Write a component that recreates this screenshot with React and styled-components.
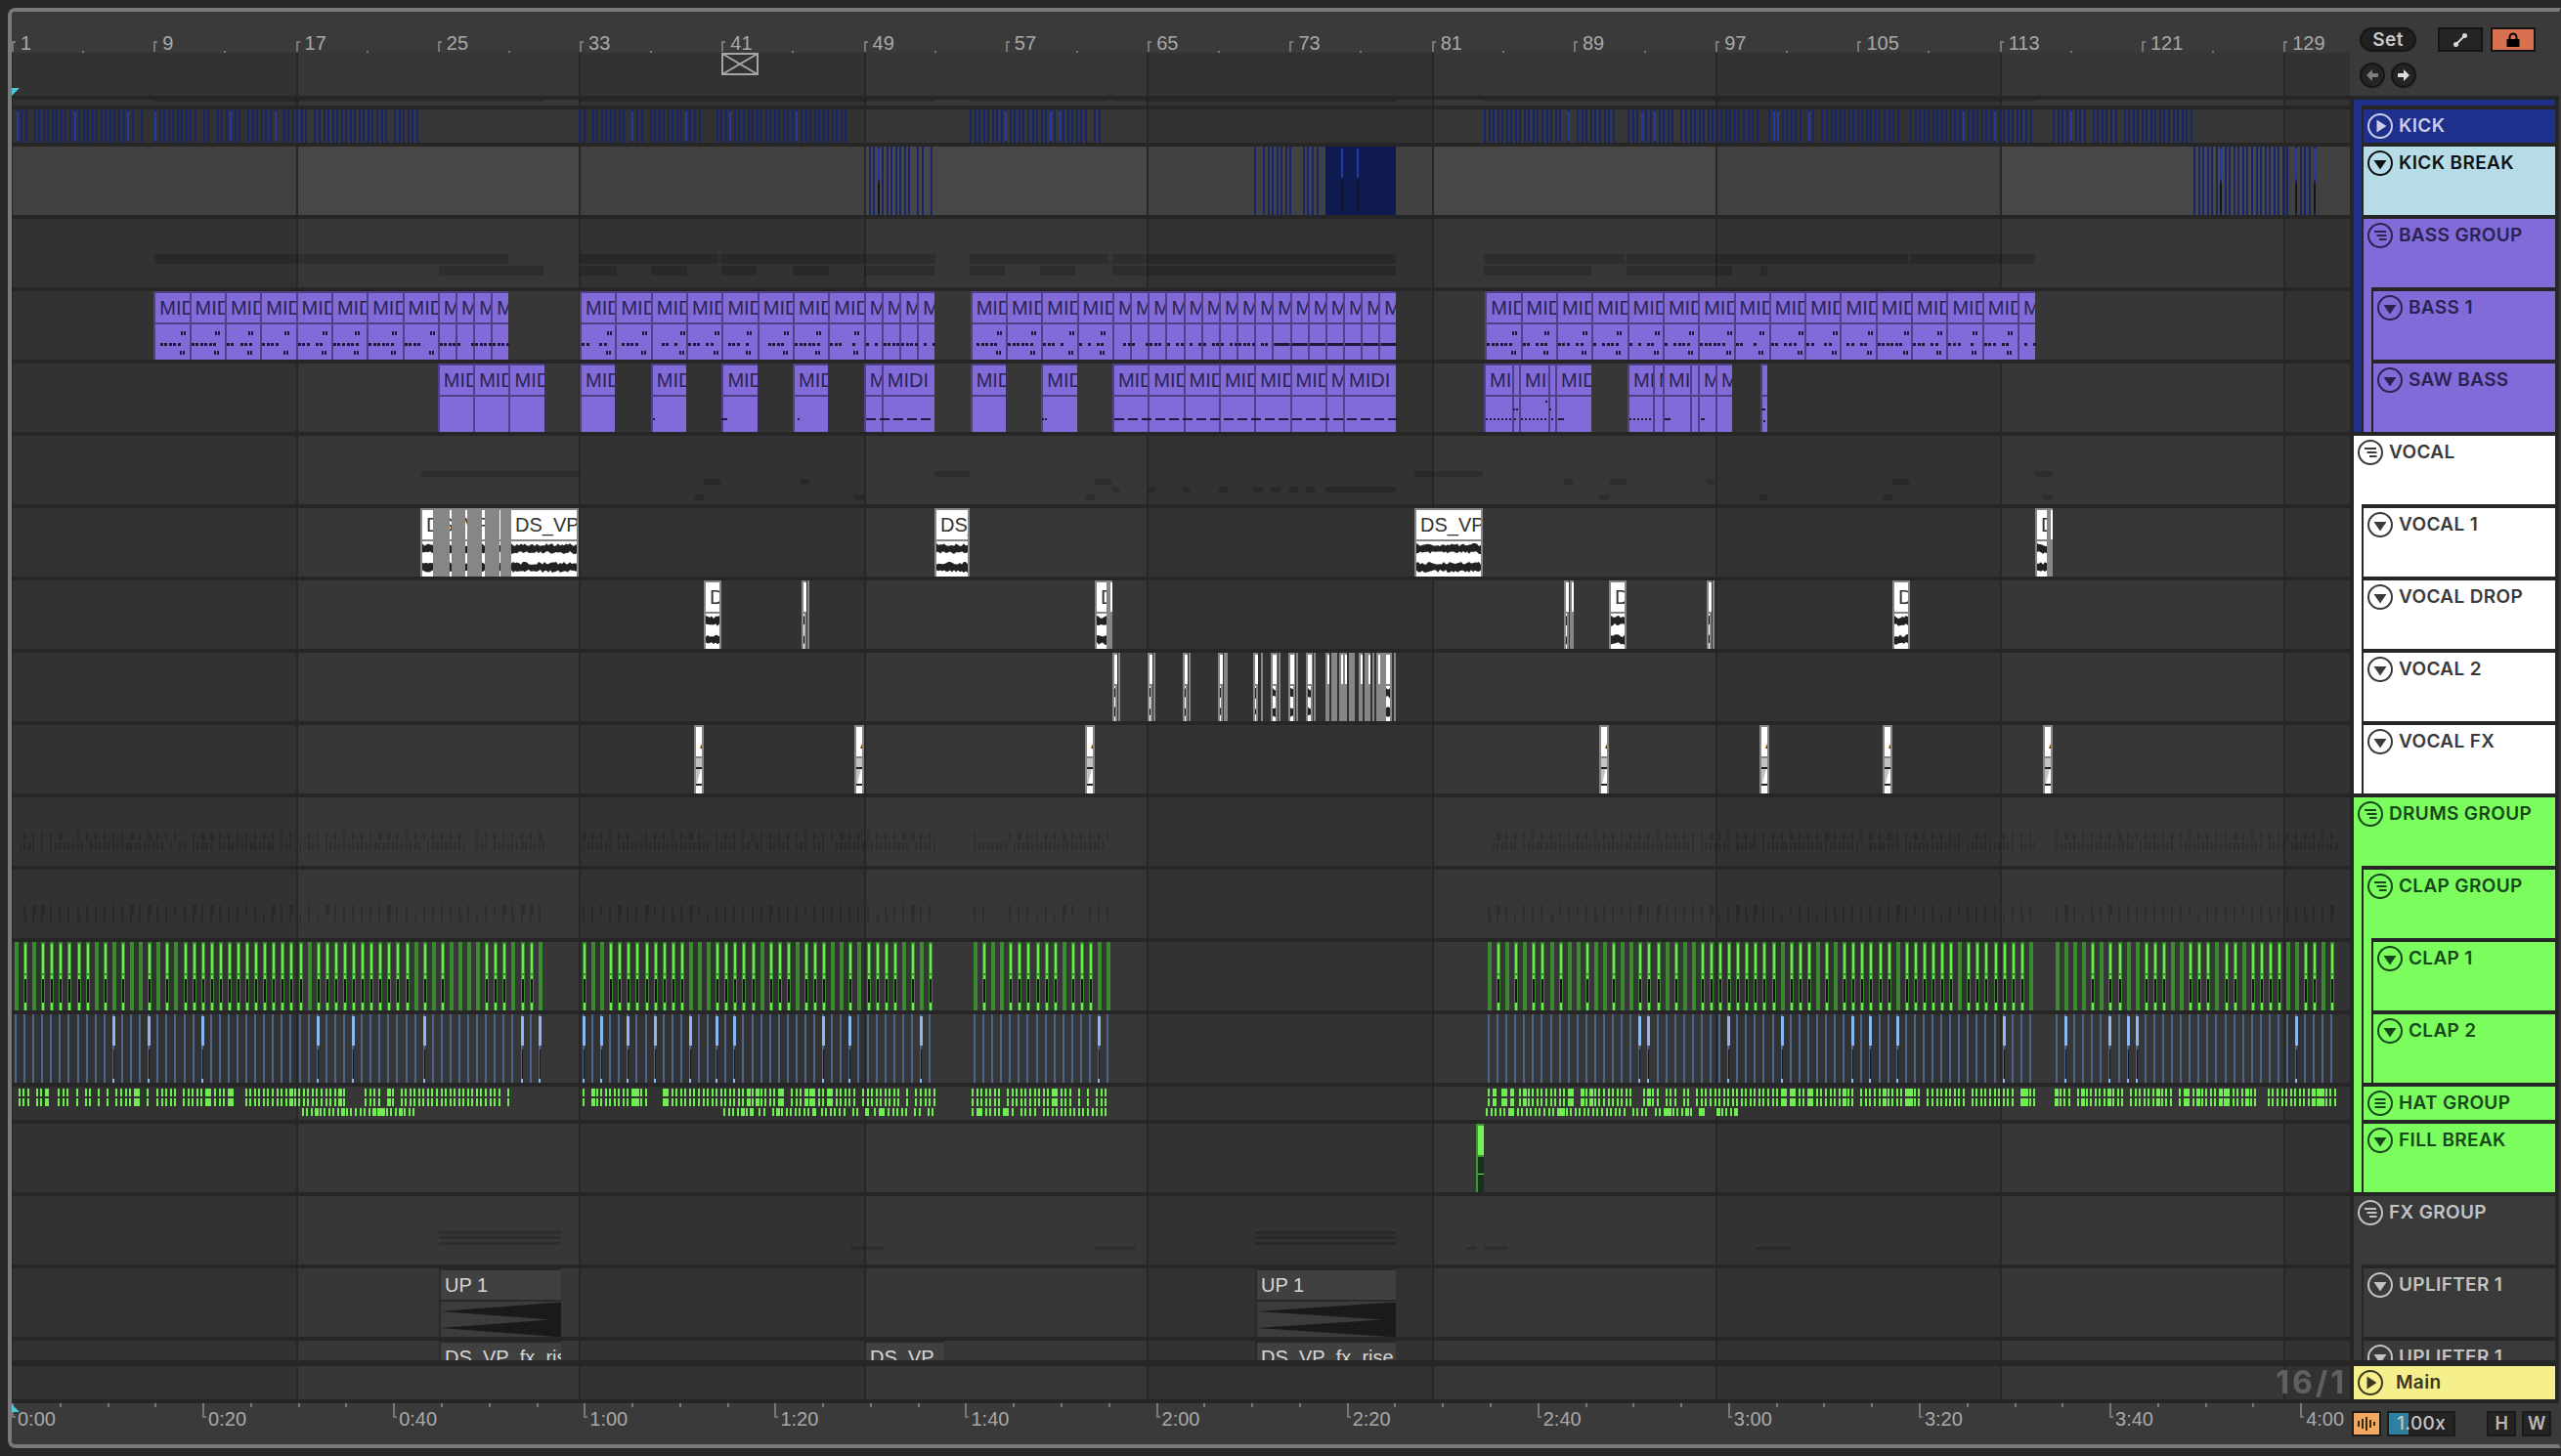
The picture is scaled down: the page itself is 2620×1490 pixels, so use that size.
import React from 'react';
import styled, { createGlobalStyle } from 'styled-components';

const SEP = '#262626';
const GRID = '#272727';
const FRAME = '#7a7a7a';
const PANEL = '#3a3a3a';
const BAR = 18.16;

const GlobalStyle = createGlobalStyle`
  html, body {
    margin: 0;
    width: 2620px;
    height: 1490px;
    overflow: hidden;
    background: #292929;
    font-family: "Liberation Sans", Arial, sans-serif;
  }
`;

const Page = styled.div`
  box-sizing: border-box;
  width: 2620px;
  height: 1490px;
  padding: 8px 0 8px 8px;
`;

const Frame = styled.div`
  height: 100%;
  box-sizing: border-box;
  display: flex;
  flex-direction: column;
  background: ${SEP};
  border: 4px solid ${FRAME};
  border-right: 2px solid ${PANEL};
  border-radius: 8px 0 0 8px;
  overflow: hidden;
`;

const TopBar = styled.div`
  display: flex;
  height: 86px;
  flex: none;
  background: ${PANEL};
`;

const TimelineHead = styled.div`
  width: 2392px;
  display: flex;
  flex-direction: column;
`;

const Ruler = styled.div`
  height: 42px;
  display: flex;
  overflow: hidden;
  flex: none;
`;

const BarCell = styled.div`
  position: relative;
  flex: 0 0 ${BAR * 8}px;
`;

const BarTick = styled.i`
  position: absolute;
  left: 0;
  top: 30px;
  width: 2px;
  height: 11px;
  background: #777;
  &::after {
    content: '';
    position: absolute;
    left: 0;
    top: 0;
    width: 4px;
    height: 2px;
    background: #777;
  }
`;

const HalfTick = styled.i`
  position: absolute;
  left: 72px;
  top: 40px;
  width: 2px;
  height: 2px;
  background: #777;
`;

const BarLabel = styled.span`
  position: absolute;
  left: 9px;
  top: 21px;
  font-size: 20px;
  line-height: 23px;
  color: #a8a8a8;
`;

const shaded = (a, b) => `repeating-linear-gradient(90deg,
  ${GRID} 0 1px, ${a} 1px 290.6px, ${GRID} 290.6px 292.6px, ${b} 292.6px 580.2px, ${GRID} 580.2px 581.2px)`;

const Lane = styled.div`
  position: relative;
  width: 2392px;
  height: ${p => p.$h}px;
  flex: none;
  background: ${p => (p.$light ? shaded('#414141', '#474747') : shaded('#323232', '#373737'))};
`;

const LocatorStrip = styled(Lane)`
  flex: 1;
`;

const LocatorFlag = styled.svg`
  position: absolute;
  left: 726px;
  top: 0;
`;

const CueTop = styled.i`
  position: absolute;
  left: 0;
  bottom: 0;
  width: 8px;
  height: 8px;
  background: #4fc3da;
  clip-path: polygon(0 0, 100% 0, 0 100%);
`;

const Controls = styled.div`
  flex: 1;
  padding: 16px 0 0 10px;
  display: grid;
  grid-template-columns: 26px 26px 62px 48px;
  grid-template-rows: 25px 25px;
  column-gap: 6px;
  row-gap: 11px;
`;

const SetPill = styled.div`
  grid-column: 1 / span 2;
  border-radius: 13px;
  background: #202020;
  border: 2px solid #161616;
  box-sizing: border-box;
  color: #c8c8c8;
  font: 600 19px/21px "Inter", sans-serif;
  letter-spacing: 0.4px;
  text-align: center;
`;

const HeadButton = styled.div`
  box-sizing: border-box;
  display: flex;
  align-items: center;
  justify-content: center;
  border: 2px solid #141414;
  background: ${p => p.$bg || '#242424'};
  margin-left: ${p => p.$ml || 0}px;
`;

const NavButton = styled.div`
  width: 26px;
  height: 26px;
  box-sizing: border-box;
  border-radius: 50%;
  background: #242424;
  border: 2px solid #161616;
  display: flex;
  align-items: center;
  justify-content: center;
`;

const Divider = styled.div`
  height: ${p => p.$h}px;
  flex: none;
`;

const Body = styled.div`
  display: flex;
  gap: 4px;
  height: 1290px;
  flex: none;
  overflow: hidden;
`;

const Lanes = styled.div`
  display: flex;
  flex-direction: column;
  gap: 4px;
  width: 2392px;
  flex: none;
`;

const Art = styled.svg`
  position: absolute;
  left: 0;
  top: 0;
  display: block;
  pointer-events: none;
`;

const Side = styled.div`
  width: 206px;
  flex: none;
  display: flex;
  flex-direction: column;
  gap: 4px;
`;

const GroupBox = styled.div`
  background: ${p => p.$bg};
  flex: none;
`;

const GroupChildren = styled.div`
  margin-left: 8px;
  padding: 4px 0 0 2px;
  background: ${SEP};
  display: flex;
  flex-direction: column;
  gap: 4px;
`;

const TrackHead = styled.div`
  height: ${p => p.$h}px;
  box-sizing: border-box;
  padding: 4px 0 0 4px;
  display: flex;
  gap: 6px;
  background: ${p => p.$bg};
  color: ${p => p.$fg};
  overflow: hidden;
`;

const TrackName = styled.span`
  font: 600 19px/26px "Inter", sans-serif;
  letter-spacing: 0.35px;
  white-space: nowrap;
`;

const MainRow = styled.div`
  display: flex;
  gap: 4px;
  height: 34px;
  flex: none;
`;

const MainLane = styled(Lane)`
  display: flex;
  align-items: center;
  justify-content: flex-end;
  padding-right: 3px;
  box-sizing: border-box;
`;

const Quant = styled.span`
  font: 700 32px/34px "Inter", sans-serif;
  letter-spacing: 3px;
  color: #606060;
`;

const MainHead = styled.div`
  width: 206px;
  background: #f5f08c;
  color: #3a3820;
  display: flex;
  align-items: center;
  box-sizing: border-box;
  padding-left: 4px;
  gap: 13px;
`;

const BottomBar = styled.div`
  display: flex;
  height: 42px;
  flex: none;
  background: ${PANEL};
`;

const TimeRuler = styled.div`
  position: relative;
  width: 2392px;
  display: flex;
  overflow: hidden;
`;

const CueBottom = styled.i`
  position: absolute;
  left: 0;
  top: 1px;
  width: 8px;
  height: 8px;
  background: #4fc3da;
  clip-path: polygon(0 0, 100% 100%, 0 100%);
`;

const TimeCell = styled.div`
  position: relative;
  flex: 0 0 195.1px;
  display: flex;
`;

const TimeTick = styled.i`
  flex: 1;
  height: 4px;
  border-left: 2px solid #777;
  box-sizing: border-box;
`;

const TimeMajor = styled.i`
  position: absolute;
  left: 0;
  top: 0;
  width: 4px;
  height: 15px;
  border-left: 2px solid #777;
  border-bottom: 2px solid #777;
  box-sizing: border-box;
`;

const TimeLabel = styled.span`
  position: absolute;
  left: 6px;
  top: 5px;
  font-size: 20px;
  line-height: 23px;
  color: #a8a8a8;
`;

const BottomTools = styled.div`
  width: 212px;
  margin-left: 4px;
  padding-top: 8px;
  box-sizing: border-box;
  display: flex;
  align-items: flex-start;
`;

const MeterButton = styled.div`
  width: 30px;
  height: 26px;
  box-sizing: border-box;
  background: #f2a95f;
  border: 2px solid #1c1c1c;
  display: flex;
  align-items: center;
  justify-content: center;
`;

const TempoBox = styled.div`
  position: relative;
  width: 70px;
  height: 26px;
  margin-left: 6px;
  box-sizing: border-box;
  background: #232323;
  border: 2px solid #1c1c1c;
  color: #c4c4c4;
  font: 500 19px/22px "Inter", sans-serif;
  letter-spacing: 0.4px;
  text-align: center;
  overflow: hidden;
`;

const TempoFill = styled.i`
  position: absolute;
  left: 0;
  top: 0;
  bottom: 0;
  width: 20px;
  background: #2f7f9e;
`;

const TempoText = styled.span`
  position: relative;
`;

const KeyButton = styled.div`
  width: 30px;
  height: 26px;
  margin-left: ${p => p.$ml || 0}px;
  box-sizing: border-box;
  background: #242424;
  border: 2px solid #1a1a1a;
  color: #b8b8b8;
  font: 600 18px/22px "Inter", sans-serif;
  text-align: center;
`;

const TONES = {
  purple: { edge: '#4f4088', bg: '#826bd9', fg: '#2a2352' },
  white: { edge: '#868686', bg: '#ffffff', fg: '#333333' },
  green: { edge: '#3f9636', bg: '#72f552', fg: '#17481a' },
  grey: { edge: '#2a2a2a', bg: '#404040', fg: '#d6d6d6' },
};

const ClipBox = styled.div.attrs(p => ({ style: { left: p.$x - 12, width: p.$w } }))`
  position: absolute;
  top: 0;
  height: 100%;
  box-sizing: border-box;
  padding: 2px ${p => (p.$tone === 'white' ? 2 : 0)}px 0 2px;
  background: ${p => TONES[p.$tone].edge};
  display: flex;
  flex-direction: column;
  gap: 2px;
  overflow: hidden;
`;

const ClipTitle = styled.div`
  height: 30px;
  flex: none;
  box-sizing: border-box;
  padding-left: 4px;
  background: ${p => TONES[p.$tone].bg};
  color: ${p => TONES[p.$tone].fg};
  font-size: 20px;
  line-height: 30px;
  white-space: nowrap;
  overflow: hidden;
`;

const ClipBody = styled.div`
  flex: 1;
  min-height: 0;
  background: ${p => p.$bg || TONES[p.$tone].bg};
  overflow: hidden;
`;

const GreyBar = styled.i.attrs(p => ({ style: { left: p.$x - 12, width: p.$w } }))`
  position: absolute;
  top: 0;
  height: 100%;
  background: #868686;
`;

// small seeded generator so that the patterns stay the same on every load
const seeded = seed => {
  let s = seed;
  return () => {
    s = (s * 16807) % 2147483647;
    return s / 2147483647;
  };
};

const pathOf = rects => rects.map(([x, y, w, h]) => `M${x} ${y}h${w}v${h}h${-w}z`).join('');

function Marks({ h, layers }) {
  return (
    <Art width={2392} height={h} viewBox={`12 0 2392 ${h}`}>
      {layers.map(([fill, rects]) => (
        <path key={fill} fill={fill} d={pathOf(rects)} />
      ))}
    </Art>
  );
}

function Clip({ x, w, tone = 'purple', title, children, bodyBg }) {
  return (
    <ClipBox $x={x} $w={w} $tone={tone}>
      <ClipTitle $tone={tone}>{title}</ClipTitle>
      <ClipBody $tone={tone} $bg={bodyBg}>{children}</ClipBody>
    </ClipBox>
  );
}

function Waveform({ w, seed }) {
  const rnd = seeded(seed);
  const top = [];
  const bot = [];
  for (let i = 0; i <= w; i += 2) {
    top.push([i, 2 + rnd() * 3, 10 + rnd() * 3]);
    bot.push([i, 21 + rnd() * 3, 29 + rnd() * 3]);
  }
  const poly = (list, a, b) =>
    list.map(p => `${p[0]},${p[a]}`).join(' ') + ' ' + [...list].reverse().map(p => `${p[0]},${p[b]}`).join(' ');
  return (
    <svg width={w} height={36} style={{ display: 'block' }}>
      <polygon fill="#222" points={poly(top, 1, 2)} />
      <polygon fill="#222" points={poly(bot, 1, 2)} />
    </svg>
  );
}

function FxWave({ w }) {
  return (
    <svg width={w} height={36} style={{ display: 'block' }}>
      <polygon fill="#c4c4c4" points={`0,0 ${w},0 ${w},9 0,9`} />
      <polygon fill="#c4c4c4" points={`0,11 5,11 1,26 0,26`} />
      <rect y={9} width={w} height={2} fill="#222" />
      <rect y={26} width={w} height={2} fill="#222" />
    </svg>
  );
}

function Riser({ w }) {
  const half = Math.round(w * 0.96);
  const tri = cy => `0,${cy} ${half},${cy - 9} ${w},${cy - 9} ${w},${cy + 9} ${half},${cy + 9}`;
  return (
    <svg width={w} height={36} style={{ display: 'block' }}>
      <polygon fill="#1a1a1a" points={tri(10)} />
      <polygon fill="#1a1a1a" points={tri(27)} />
    </svg>
  );
}

const KICK_RANGES = [[12, 149], [158, 427], [592, 872], [992, 1129], [1518, 1655], [1665, 1798], [1809, 1948], [1954, 2078], [2100, 2242]];
const BREAK_RANGES = [[884, 954], [1283, 1352], [2244, 2369]];

const stripes = (ranges, h, seed, withLow) => {
  const rnd = seeded(seed);
  const dim = [];
  const bright = [];
  const low = [];
  ranges.forEach(([a, b]) => {
    for (let x = a; x < b - 1; x += BAR / 4) {
      const r = rnd();
      const px = Math.round(x);
      if (r < 0.06) continue;
      dim.push([px, 0, 2, h]);
      if (r < 0.13) {
        bright.push([px, 2, 2, withLow ? h * 0.45 : h - 4]);
        if (withLow) low.push([px, h * 0.52, 2, h * 0.46]);
      }
    }
  });
  return { dim, bright, low };
};

function KickLane() {
  const s = stripes(KICK_RANGES, 34, 77, false);
  return <Marks h={34} layers={[['#18256a', s.dim], ['#2338a8', s.bright]]} />;
}

function BreakLane() {
  const s = stripes(BREAK_RANGES, 70, 131, true);
  const solidBright = [[1372, 2, 2, 30], [1388, 2, 2, 30]];
  const solidLow = [[1372, 36, 2, 32], [1388, 36, 2, 32]];
  return (
    <Marks
      h={70}
      layers={[
        ['#18256a', s.dim],
        ['#0e1a50', [[1356, 0, 72, 70]]],
        ['#2338a8', [...s.bright, ...solidBright]],
        ['#14141c', [...s.low, ...solidLow]],
      ]}
    />
  );
}

const two = (from, n) => Array.from({ length: n }, (_, i) => [12 + (from + i * 2) * BAR, 2 * BAR]);
const one = (from, n) => Array.from({ length: n }, (_, i) => [12 + (from + i) * BAR, BAR]);

const BASS_CLIPS = [
  ...two(8, 8), ...one(24, 4),
  ...two(32, 8), ...one(48, 4),
  ...two(54, 4),
  ...one(62, 16),
  ...two(83, 4),
  ...two(91, 8),
  ...two(107, 3), ...one(113, 1),
];

const SAW_CLIPS = [
  ...two(24, 3),
  ...two(32, 1), ...two(36, 1), ...two(40, 1), ...two(44, 1),
  ...one(48, 1), [12 + 49 * BAR, 3 * BAR],
  ...two(54, 1), ...two(58, 1),
  ...two(62, 6), ...one(74, 1), [12 + 75 * BAR, 3 * BAR],
  [1518, 29], [1547, 7], [1554, 30], [1584, 7], [1591, 37],
  [1665, 26], [1691, 10], [1701, 28], [1729, 8], [1737, 18], [1755, 17],
  [1801, 7],
];

const sawTitle = w => (w < 10 ? '' : 'MIDI');

function BassNotes() {
  const rnd = seeded(4242);
  const notes = [];
  BASS_CLIPS.forEach(([x, w]) => {
    const end = x + w;
    if (x > 1300 && x < 1430) {
      notes.push([x + 2, 53, w - 2, 3]);
      return;
    }
    for (let nx = x + 2; nx < end - (w > 20 ? 8 : 0); nx += 4.54) {
      if (rnd() > 0.25) notes.push([Math.round(nx), 53, 3, 3]);
    }
    if (w > 20) {
      const off = 6 + Math.round(rnd() * 6);
      notes.push([Math.round(end - off), 41, 2, 4], [Math.round(end - off + 3), 41, 2, 4]);
      notes.push([Math.round(end - off - 1), 61, 2, 4], [Math.round(end - off + 2), 61, 2, 4]);
    }
  });
  return <Marks h={70} layers={[['#1f1a3c', notes]]} />;
}

function SawNotes() {
  const notes = [];
  [[884, 956], [1138, 1428]].forEach(([a, b]) => {
    for (let x = a + 2; x < b; x += 14) notes.push([x, 56, 10, 2]);
  });
  for (let x = 1520; x < 1546; x += 4) notes.push([x, 56, 2, 2]);
  for (let x = 1556; x < 1582; x += 4) notes.push([x, 56, 2, 2]);
  for (let x = 1667; x < 1690; x += 4) notes.push([x, 56, 2, 2]);
  notes.push([1594, 56, 6, 2], [1703, 56, 6, 2], [1740, 56, 4, 2], [1581, 38, 2, 2]);
  notes.push([1548, 46, 2, 2], [1551, 46, 2, 2], [1549, 56, 2, 2], [1585, 46, 2, 2], [1587, 56, 2, 2]);
  notes.push([1804, 46, 2, 2], [1802, 46, 2, 2], [1804, 58, 2, 2], [816, 56, 2, 2], [1066, 56, 2, 2], [1069, 56, 2, 2], [668, 56, 2, 2], [738, 56, 6, 2]);
  return <Marks h={70} layers={[['#1f1a3c', notes]]} />;
}

const BAND = 'rgba(0,0,0,0.16)';

const bands = (ranges, y, h) => ranges.map(([a, b]) => [a, y, b - a, h]);

const BASS_SPANS = [[158, 520], [593, 735], [737, 957], [992, 1134], [1138, 1428], [1518, 1662], [1664, 1952], [1954, 2082]];
const SAW_SPANS = [[449, 556], [593, 631], [666, 703], [738, 774], [811, 848], [884, 956], [992, 1028], [1064, 1100], [1138, 1428], [1518, 1628], [1664, 1772], [1801, 1808]];

const DRUM_SPANS = [[15, 556], [596, 956], [996, 1136], [1522, 2082], [2103, 2390]];
const HAT_SPANS = [[14, 152], [160, 520], [596, 956], [994, 1133], [1522, 2082], [2102, 2392]];
const HAT_LOW = [[304, 430], [740, 956], [994, 1133], [1520, 1782]];

const ticks = (spans, y, h, pitch, seed, wide) => {
  const rnd = seeded(seed);
  const out = [];
  spans.forEach(([a, b]) => {
    for (let x = a; x < b; x += pitch) {
      const r = rnd();
      if (r < 0.1) continue;
      out.push([Math.round(x), y, r > 0.88 ? wide : 2, h]);
    }
  });
  return out;
};

function ClapLane() {
  const rnd = seeded(9001);
  const dim = [];
  const bright = [];
  const black = [];
  const tail = [];
  DRUM_SPANS.forEach(([a, b]) => {
    for (let x = a; x < b; x += BAR / 2) {
      const px = Math.round(x);
      dim.push([px, 0, 4, 70]);
      if (rnd() > 0.28) {
        bright.push([px + 1, 2, 2, 30]);
        black.push([px + 1, 38, 2, 24]);
        tail.push([px + 1, 62, 2, 8], [px + 1, 34, 2, 4]);
      }
    }
  });
  return <Marks h={70} layers={[['#3c8a2f', dim], ['#66ee4a', [...bright, ...tail]], ['#141414', black]]} />;
}

function RideLane() {
  const rnd = seeded(5150);
  const dim = [];
  const bright = [];
  const black = [];
  DRUM_SPANS.forEach(([a, b]) => {
    for (let x = a; x < b; x += BAR / 2) {
      const px = Math.round(x);
      dim.push([px, 0, 2, 70]);
      if (rnd() > 0.82) {
        bright.push([px, 2, 3, 30], [px, 66, 2, 4]);
        black.push([px + 1, 36, 1, 30]);
      }
    }
  });
  return <Marks h={70} layers={[['#4a668c', dim], ['#8ab8f0', bright], ['#141a24', black]]} />;
}

function HatLane() {
  const top = ticks(HAT_SPANS, 2, 8, BAR / 4, 321, 4);
  const mid = ticks(HAT_SPANS, 12, 8, BAR / 4, 321, 4);
  const low = ticks(HAT_LOW, 22, 8, BAR / 4, 777, 4);
  return <Marks h={34} layers={[['#70ee50', [...top, ...mid, ...low]]]} />;
}

const VOCAL_GHOST = [
  ...bands([[430, 593], [956, 992], [1447, 1517], [2082, 2100]], 36, 6),
  ...bands([[720, 738], [819, 828], [1120, 1138], [1600, 1610], [1646, 1664], [1746, 1754], [1936, 1954]], 44, 6),
  ...bands([[1138, 1146], [1174, 1182], [1210, 1218], [1246, 1256], [1282, 1292], [1300, 1310], [1318, 1328], [1336, 1346], [1356, 1428]], 52, 6),
  ...bands([[710, 720], [874, 884], [1110, 1120], [1636, 1646], [1800, 1808], [1926, 1936], [2090, 2100]], 60, 6),
];

const THIN = [
  [1138, 5], [1174, 5], [1210, 5], [1246, 5], [1252, 4], [1282, 5], [1300, 7], [1318, 7], [1336, 7],
  [1356, 4], [1370, 3], [1374, 4], [1390, 4], [1398, 4], [1408, 4], [1416, 8],
];

const VOCAL2_GREY = [[1144, 2], [1180, 2], [1216, 2], [1254, 2], [1290, 2], [1308, 2], [1326, 2], [1344, 2], [1362, 6], [1380, 6], [1396, 2], [1404, 2], [1412, 4], [1426, 2]];

const FX_POS = [710, 874, 1110, 1636, 1800, 1926, 2090];

function Vocal1Clips() {
  return (
    <>
      <Clip x={430} w={90} tone="white" title="DS_VP"><Waveform w={90} seed={11} /></Clip>
      {[[443, 17], [462, 14], [478, 15], [496, 15], [512, 9]].map(([x, w]) => <GreyBar key={x} $x={x} $w={w} />)}
      <Clip x={521} w={71} tone="white" title="DS_VP"><Waveform w={71} seed={22} /></Clip>
      <Clip x={956} w={36} tone="white" title="DS_VP"><Waveform w={32} seed={33} /></Clip>
      <Clip x={1447} w={70} tone="white" title="DS_VP"><Waveform w={66} seed={44} /></Clip>
      <Clip x={2082} w={14} tone="white" title="DS_VP"><Waveform w={10} seed={55} /></Clip>
      <Clip x={2096} w={4} tone="white" title=""><Waveform w={2} seed={66} /></Clip>
    </>
  );
}

function VocalDropClips() {
  return (
    <>
      {[[720, 18, 'D'], [820, 5, ''], [1120, 14, 'D'], [1134, 4, ''], [1600, 5, ''], [1606, 4, ''], [1646, 18, 'D'], [1746, 5, ''], [1936, 18, 'D']].map(([x, w, t], i) => (
        <Clip key={x} x={x} w={w} tone="white" title={t ? 'DS_VP' : ''}><Waveform w={w} seed={70 + i} /></Clip>
      ))}
      {[[826, 2], [1752, 2]].map(([x, w]) => <GreyBar key={x} $x={x} $w={w} />)}
    </>
  );
}

const TRACK_ICON = {
  play: <polygon points="9.5,6.5 19.5,13 9.5,19.5" fill="currentColor" />,
  down: <polygon points="6.5,10 19.5,10 13,19.5" fill="currentColor" />,
  group: <path d="M7 9h12M9.5 13h10M12 17h7.5" fill="none" stroke="currentColor" strokeWidth="2" />,
  folded: <path d="M7.5 9h11M7.5 13h11M7.5 17h11" fill="none" stroke="currentColor" strokeWidth="2" />,
};

function TrackIcon({ kind }) {
  return (
    <svg width={26} height={26} viewBox="0 0 26 26" style={{ flex: 'none' }}>
      <circle cx="13" cy="13" r="12" fill="none" stroke="currentColor" strokeWidth="2" />
      {TRACK_ICON[kind]}
    </svg>
  );
}

function Head({ name, kind = 'down', bg, fg, h = 70 }) {
  return (
    <TrackHead $bg={bg} $fg={fg} $h={h}>
      <TrackIcon kind={kind} />
      <TrackName>{name}</TrackName>
    </TrackHead>
  );
}

const C = {
  blue: ['#1f2f8c', '#c9cde8'],
  ice: ['#b6dce8', '#111111'],
  purple: ['#826bd9', '#2a2352'],
  white: ['#ffffff', '#3a3a3a'],
  green: ['#7bfd5d', '#17481a'],
  fx: ['#3a3a3a', '#c3c3c3'],
};

function Group({ color, name, kind = 'group', children, thin }) {
  const [bg, fg] = C[color];
  return (
    <GroupBox $bg={bg}>
      {thin ? <Divider $h={6} /> : <Head name={name} kind={kind} bg={bg} fg={fg} />}
      <GroupChildren>{children}</GroupChildren>
    </GroupBox>
  );
}

function Track({ color, ...rest }) {
  const [bg, fg] = C[color];
  return <Head bg={bg} fg={fg} {...rest} />;
}

function TrackPanel() {
  return (
    <Side>
      <Group color="blue" thin>
        <Track color="blue" name="KICK" kind="play" h={34} />
        <Track color="ice" name="KICK BREAK" />
        <Group color="purple" name="BASS GROUP">
          <Track color="purple" name="BASS 1" />
          <Track color="purple" name="SAW BASS" />
        </Group>
      </Group>
      <Group color="white" name="VOCAL">
        <Track color="white" name="VOCAL 1" />
        <Track color="white" name="VOCAL DROP" />
        <Track color="white" name="VOCAL 2" />
        <Track color="white" name="VOCAL FX" />
      </Group>
      <Group color="green" name="DRUMS GROUP">
        <Group color="green" name="CLAP GROUP">
          <Track color="green" name="CLAP 1" />
          <Track color="green" name="CLAP 2" />
        </Group>
        <Track color="green" name="HAT GROUP" kind="folded" h={34} />
        <Track color="green" name="FILL BREAK" />
      </Group>
      <Group color="fx" name="FX GROUP">
        <Track color="fx" name="UPLIFTER 1" />
        <Track color="fx" name="UPLIFTER 1" />
      </Group>
    </Side>
  );
}

const BARS = Array.from({ length: 17 }, (_, i) => 1 + i * 8);
const TIMES = Array.from({ length: 13 }, (_, i) => {
  const s = i * 20;
  return `${Math.floor(s / 60)}:${String(s % 60).padStart(2, '0')}`;
});

function Arrangement() {
  return (
    <Lanes>
      <Lane $h={6}>
        <Marks h={6} layers={[[BAND, bands([[158, 556], [593, 957], [992, 1134], [1138, 1428], [1518, 2082]], 0, 2)]]} />
      </Lane>
      <Lane $h={34}><KickLane /></Lane>
      <Lane $h={70} $light><BreakLane /></Lane>
      <Lane $h={70}>
        <Marks h={70} layers={[[BAND, [...bands(BASS_SPANS, 36, 10), ...bands(SAW_SPANS, 48, 10)]]]} />
      </Lane>
      <Lane $h={70}>
        {BASS_CLIPS.map(([x, w]) => <Clip key={x} x={x} w={w} title="MIDI" />)}
        <BassNotes />
      </Lane>
      <Lane $h={70}>
        {SAW_CLIPS.map(([x, w]) => <Clip key={x} x={x} w={w} title={sawTitle(w)} />)}
        <SawNotes />
      </Lane>
      <Lane $h={70}>
        <Marks h={70} layers={[[BAND, VOCAL_GHOST]]} />
      </Lane>
      <Lane $h={70}><Vocal1Clips /></Lane>
      <Lane $h={70}><VocalDropClips /></Lane>
      <Lane $h={70}>
        {THIN.map(([x, w], i) => (
          <Clip key={x} x={x} w={w} tone="white" title=""><Waveform w={w} seed={200 + i} /></Clip>
        ))}
        {VOCAL2_GREY.map(([x, w]) => <GreyBar key={x} $x={x} $w={w} />)}
      </Lane>
      <Lane $h={70}>
        {FX_POS.map(x => (
          <Clip key={x} x={x} w={10} tone="white" title="A"><FxWave w={8} /></Clip>
        ))}
      </Lane>
      <Lane $h={70}>
        <Marks h={70} layers={[[BAND, [...ticks(DRUM_SPANS, 36, 8, BAR / 2, 808, 4), ...ticks(DRUM_SPANS, 46, 8, BAR / 4, 909, 3)]]]} />
      </Lane>
      <Lane $h={70}>
        <Marks h={70} layers={[[BAND, [...ticks(DRUM_SPANS, 36, 10, BAR / 2, 606, 4), ...ticks(DRUM_SPANS, 47, 8, BAR / 2, 707, 4)]]]} />
      </Lane>
      <Lane $h={70}><ClapLane /></Lane>
      <Lane $h={70}><RideLane /></Lane>
      <Lane $h={34}><HatLane /></Lane>
      <Lane $h={70}>
        <Clip x={1510} w={8} tone="green" title="" bodyBg="#17321a">
          <svg width={6} height={36} style={{ display: 'block' }}>
            <rect y={17} width={6} height={1} fill="#66ee4a" />
          </svg>
        </Clip>
      </Lane>
      <Lane $h={70}>
        <Marks
          h={70}
          layers={[[BAND, [
            ...bands([[449, 574], [1284, 1428]], 36, 3),
            ...bands([[449, 574], [1284, 1428]], 41, 3),
            ...bands([[449, 574], [1284, 1428]], 47, 3),
            ...bands([[870, 905], [1120, 1162], [1500, 1510], [1518, 1542], [1796, 1832]], 52, 3),
          ]]]}
        />
      </Lane>
      <Lane $h={70}>
        <Clip x={449} w={125} tone="grey" title="UP 1" bodyBg="#3c3c3c"><Riser w={123} /></Clip>
        <Clip x={1284} w={144} tone="grey" title="UP 1" bodyBg="#3c3c3c"><Riser w={142} /></Clip>
      </Lane>
      <Lane $h={70}>
        <Clip x={449} w={125} tone="grey" title="DS_VP_fx_rise" />
        <Clip x={884} w={82} tone="grey" title="DS_VP" />
        <Clip x={1284} w={144} tone="grey" title="DS_VP_fx_rise" />
      </Lane>
    </Lanes>
  );
}

function App() {
  return (
    <Page>
      <GlobalStyle />
      <Frame>
        <TopBar>
          <TimelineHead>
            <Ruler>
              {BARS.map(n => (
                <BarCell key={n}>
                  <BarTick />
                  <HalfTick />
                  <BarLabel>{n}</BarLabel>
                </BarCell>
              ))}
            </Ruler>
            <LocatorStrip>
              <LocatorFlag width={38} height={23} viewBox="0 0 38 23">
                <path d="M1 1h36v21H1zM1 1l36 21M37 1L1 22" fill="none" stroke="#a4a4a4" strokeWidth="2" />
              </LocatorFlag>
              <CueTop />
            </LocatorStrip>
          </TimelineHead>
          <Controls>
            <SetPill>Set</SetPill>
            <HeadButton $ml={16}>
              <svg width={16} height={16} viewBox="0 0 16 16">
                <path d="M3.5 12.5L12.5 3.5" stroke="#d8d8d8" strokeWidth="2" />
                <circle cx="3.5" cy="12.5" r="2.5" fill="#d8d8d8" />
                <circle cx="12.5" cy="3.5" r="2.5" fill="#d8d8d8" />
              </svg>
            </HeadButton>
            <HeadButton $bg="#d8714f" $ml={2}>
              <svg width={16} height={16} viewBox="0 0 16 16">
                <path d="M4.5 7V5a3.5 3.5 0 0 1 7 0v2" fill="none" stroke="#000" strokeWidth="2" />
                <rect x="1.5" y="7" width="13" height="8" fill="#000" />
              </svg>
            </HeadButton>
            <NavButton>
              <svg width={14} height={14} viewBox="0 0 14 14">
                <path d="M7 1L1 7l6 6V9h6V5H7z" fill="#7c7c7c" />
              </svg>
            </NavButton>
            <NavButton>
              <svg width={14} height={14} viewBox="0 0 14 14">
                <path d="M7 1l6 6-6 6V9H1V5h6z" fill="#dcdcdc" />
              </svg>
            </NavButton>
          </Controls>
        </TopBar>
        <Divider $h={4} />
        <Body>
          <Arrangement />
          <TrackPanel />
        </Body>
        <Divider $h={6} />
        <MainRow>
          <MainLane $h={34}><Quant>16/1</Quant></MainLane>
          <MainHead>
            <TrackIcon kind="play" />
            <TrackName>Main</TrackName>
          </MainHead>
        </MainRow>
        <Divider $h={4} />
        <BottomBar>
          <TimeRuler>
            {TIMES.map(t => (
              <TimeCell key={t}>
                {[0, 1, 2, 3].map(k => <TimeTick key={k} />)}
                <TimeMajor />
                <TimeLabel>{t}</TimeLabel>
              </TimeCell>
            ))}
            <CueBottom />
          </TimeRuler>
          <BottomTools>
            <MeterButton>
              <svg width={20} height={16} viewBox="0 0 20 16">
                <path d="M2 5v6M6 3v10M10 1v14M14 4v8M18 6v4" stroke="#3a2a10" strokeWidth="2" />
              </svg>
            </MeterButton>
            <TempoBox>
              <TempoFill />
              <TempoText>1.00x</TempoText>
            </TempoBox>
            <KeyButton $ml={32}>H</KeyButton>
            <KeyButton $ml={6}>W</KeyButton>
          </BottomTools>
        </BottomBar>
      </Frame>
    </Page>
  );
}

export default App;
